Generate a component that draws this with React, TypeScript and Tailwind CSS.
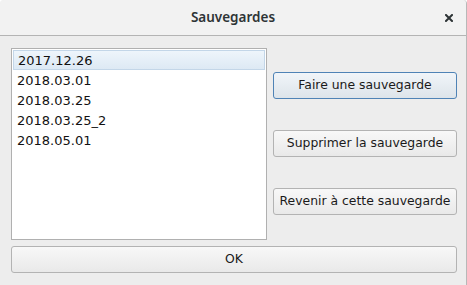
import React from 'react';

const saves = ['2017.12.26', '2018.03.01', '2018.03.25', '2018.03.25_2', '2018.05.01'];

const Btn: React.FC<{ label: string; focused?: boolean; className?: string }> = ({ label, focused, className }) => (
  <button
    className={
      'h-[27px] rounded-[3px] border text-[12.4px] text-[#1a1a1a] ' +
      (focused
        ? 'border-[#4f83b6] bg-gradient-to-b from-[#f1f5f9] to-[#dde4ea] '
        : 'border-[#b3b3b3] bg-gradient-to-b from-[#f8f8f8] to-[#e9e9e9] ') +
      (className ?? '')
    }
  >
    {label}
  </button>
);

export default function App() {
  const [selected, setSelected] = React.useState(0);

  return (
    <div
      className="w-[467px] h-[285px] bg-[#ededed] flex flex-col overflow-hidden rounded-t-[4px] border-r border-[#b8b8b8]"
      style={{ fontFamily: '"DejaVu Sans", sans-serif' }}
    >
      {/* Barre de titre */}
      <div className="h-[36px] shrink-0 flex items-center justify-center relative bg-[#f2f2f2] border-b border-[#b4b4b4]">
        <span className="text-[13.5px] font-semibold text-[#2e3436]" style={{ fontFamily: '"Noto Sans", sans-serif' }}>
          Sauvegardes
        </span>
        <svg className="absolute right-[13px] top-[14px]" width="8" height="8" viewBox="0 0 8 8">
          <path d="M1 1 L7 7 M7 1 L1 7" stroke="#2e3436" strokeWidth="2" strokeLinecap="square" />
        </svg>
      </div>

      {/* Contenu */}
      <div className="flex-1 flex flex-col pl-[11px] pr-[9px] pt-[12px]">
        <div className="flex gap-[6px]">
          <div className="w-[256px] h-[192px] bg-white border border-[#b0b0b0] p-px">
            {saves.map((s, i) => (
              <div
                key={s}
                onClick={() => setSelected(i)}
                className={
                  'h-[20px] pl-[4px] flex items-center text-[13px] text-[#111] leading-none ' +
                  (i === selected ? 'bg-gradient-to-b from-[#eef5fb] to-[#dde9f4] border border-[#c3d6e8]' : '')
                }
              >
                {s}
              </div>
            ))}
          </div>

          <div className="flex-1 flex flex-col pt-[24px] gap-[31px]">
            <Btn label="Faire une sauvegarde" focused />
            <Btn label="Supprimer la sauvegarde" />
            <Btn label="Revenir à cette sauvegarde" />
          </div>
        </div>

        <Btn label="OK" className="mt-[6px] w-full" />
      </div>
    </div>
  );
}
